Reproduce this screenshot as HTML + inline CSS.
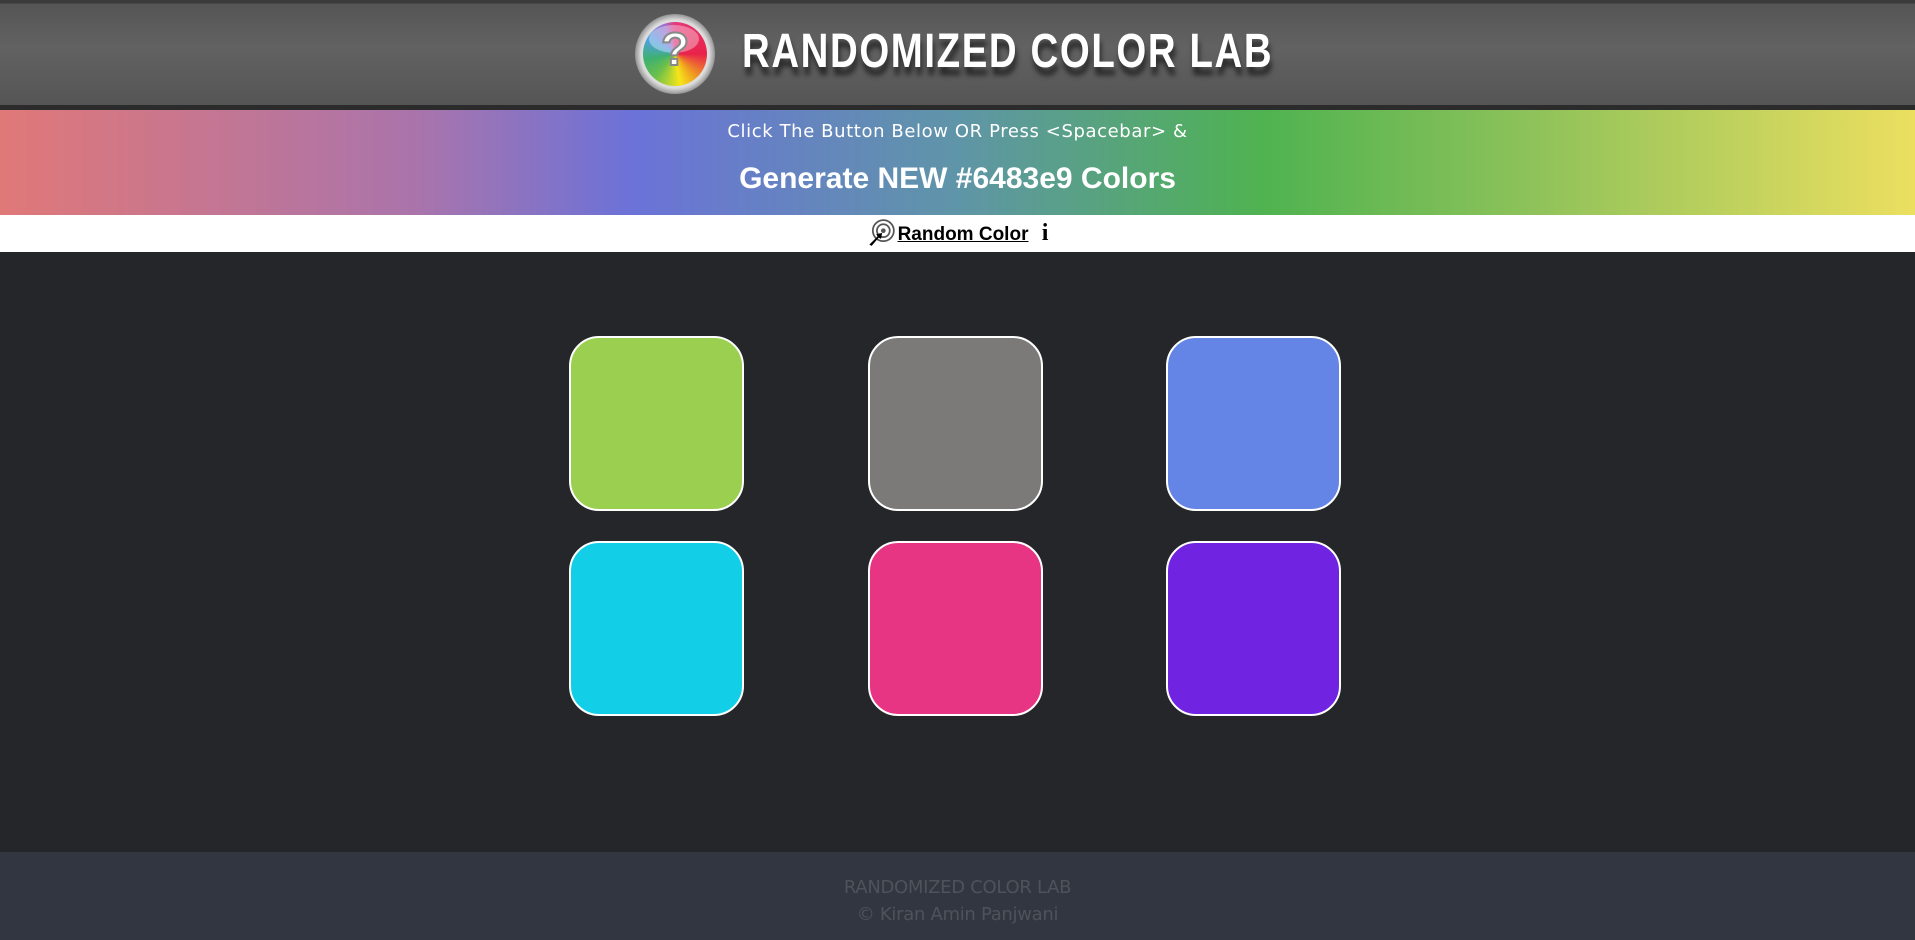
<!DOCTYPE html>
<html><head><meta charset="utf-8"><style>
*{margin:0;padding:0;box-sizing:border-box}
body{width:1915px;height:940px;overflow:hidden;background:#252629;font-family:"Liberation Sans",sans-serif;position:relative}
.hdr{position:absolute;left:0;top:0;width:1915px;height:110px;background:linear-gradient(#3a3a3a 0,#3a3a3a 3px,#555 4px,#626262 45%,#555 100%);border-bottom:5px solid #2b2b2b}
.logo{position:absolute;left:635px;top:14px;width:80px;height:80px;border-radius:50%;background:radial-gradient(circle,#ddd 60%,#777 75%,#eee 85%,#888 100%);}
.logo .in{position:absolute;left:8px;top:8px;width:64px;height:64px;border-radius:50%;background:conic-gradient(from 0deg,#e53a7a,#e8234a 90deg,#f0a020 140deg,#f6e51a 170deg,#6cc04a 220deg,#3fb070 260deg,#50a0e0 300deg,#a070d0 340deg,#e53a7a);}
.logo .in:after{content:"";position:absolute;left:6px;top:3px;width:50px;height:28px;border-radius:50%;background:rgba(255,255,255,.35)}
.logo span{position:absolute;left:0;top:8px;width:80px;text-align:center;color:#fff;font:bold 46px "Liberation Sans",sans-serif;-webkit-text-stroke:2px #888;z-index:2}
.title{position:absolute;left:742px;top:24px;font-weight:bold;font-size:48px;color:#fff;letter-spacing:2px;transform:scaleX(0.8);transform-origin:left top;text-shadow:2px 8px 6px rgba(0,0,0,.6);white-space:nowrap}
.band{position:absolute;left:0;top:110px;width:1915px;height:105px;background:linear-gradient(90deg,#e07878 0%,#a974ac 22%,#6b72d8 33%,#5f95a8 50%,#4fb350 66%,#8ec25a 80%,#ecdf60 100%);color:#fff;text-align:center}
.l1{position:absolute;top:11px;width:100%;font-family:"DejaVu Sans",sans-serif;font-size:18px;letter-spacing:.6px}
.l2{position:absolute;top:52px;width:100%;font-size:30px;font-weight:bold}
.wbar{position:absolute;left:0;top:215px;width:1915px;height:37px;background:#fff;text-align:center;font-weight:bold;font-size:19px;line-height:37px}
.wbar u{color:#000}
.sq{position:absolute;width:175px;height:175px;border:2px solid #fff;border-radius:30px}
.foot{position:absolute;left:0;top:852px;width:1915px;height:88px;background:#313640;text-align:center;color:#4e535b;font-family:"DejaVu Sans",sans-serif;font-size:18px;line-height:27px;padding-top:22px;letter-spacing:-.3px}
</style></head><body>
<div class="hdr">
<div class="logo"><div class="in"></div><span>?</span></div>
<div class="title">RANDOMIZED COLOR LAB</div>
</div>
<div class="band"><div class="l1">Click The Button Below OR Press &lt;Spacebar&gt; &amp;</div><div class="l2">Generate NEW #6483e9 Colors</div></div>
<div class="wbar"><svg width="28" height="28" viewBox="0 0 24 24" style="vertical-align:-7px;margin-right:3px"><circle cx="14" cy="10" r="9" fill="none" stroke="#555" stroke-width="1.5"/><circle cx="14" cy="10" r="5.5" fill="none" stroke="#555" stroke-width="1.5"/><circle cx="14" cy="10" r="2" fill="#555"/><path d="M2 22 L9 15 L8 13 L13 12 L12 17 L10 16 L4 23Z" fill="#000"/></svg><u>Random Color</u> <span style="font-family:'Liberation Serif',serif;font-size:24px;margin-left:8px">i</span></div>
<div class="sq" style="left:569px;top:336px;background:#9acf4f"></div>
<div class="sq" style="left:868px;top:336px;background:#7b7a78"></div>
<div class="sq" style="left:1166px;top:336px;background:#6484e6"></div>
<div class="sq" style="left:569px;top:541px;background:#12cfe7"></div>
<div class="sq" style="left:868px;top:541px;background:#e73584"></div>
<div class="sq" style="left:1166px;top:541px;background:#7123e2"></div>
<div class="foot">RANDOMIZED COLOR LAB<br>© Kiran Amin Panjwani</div>
</body></html>
